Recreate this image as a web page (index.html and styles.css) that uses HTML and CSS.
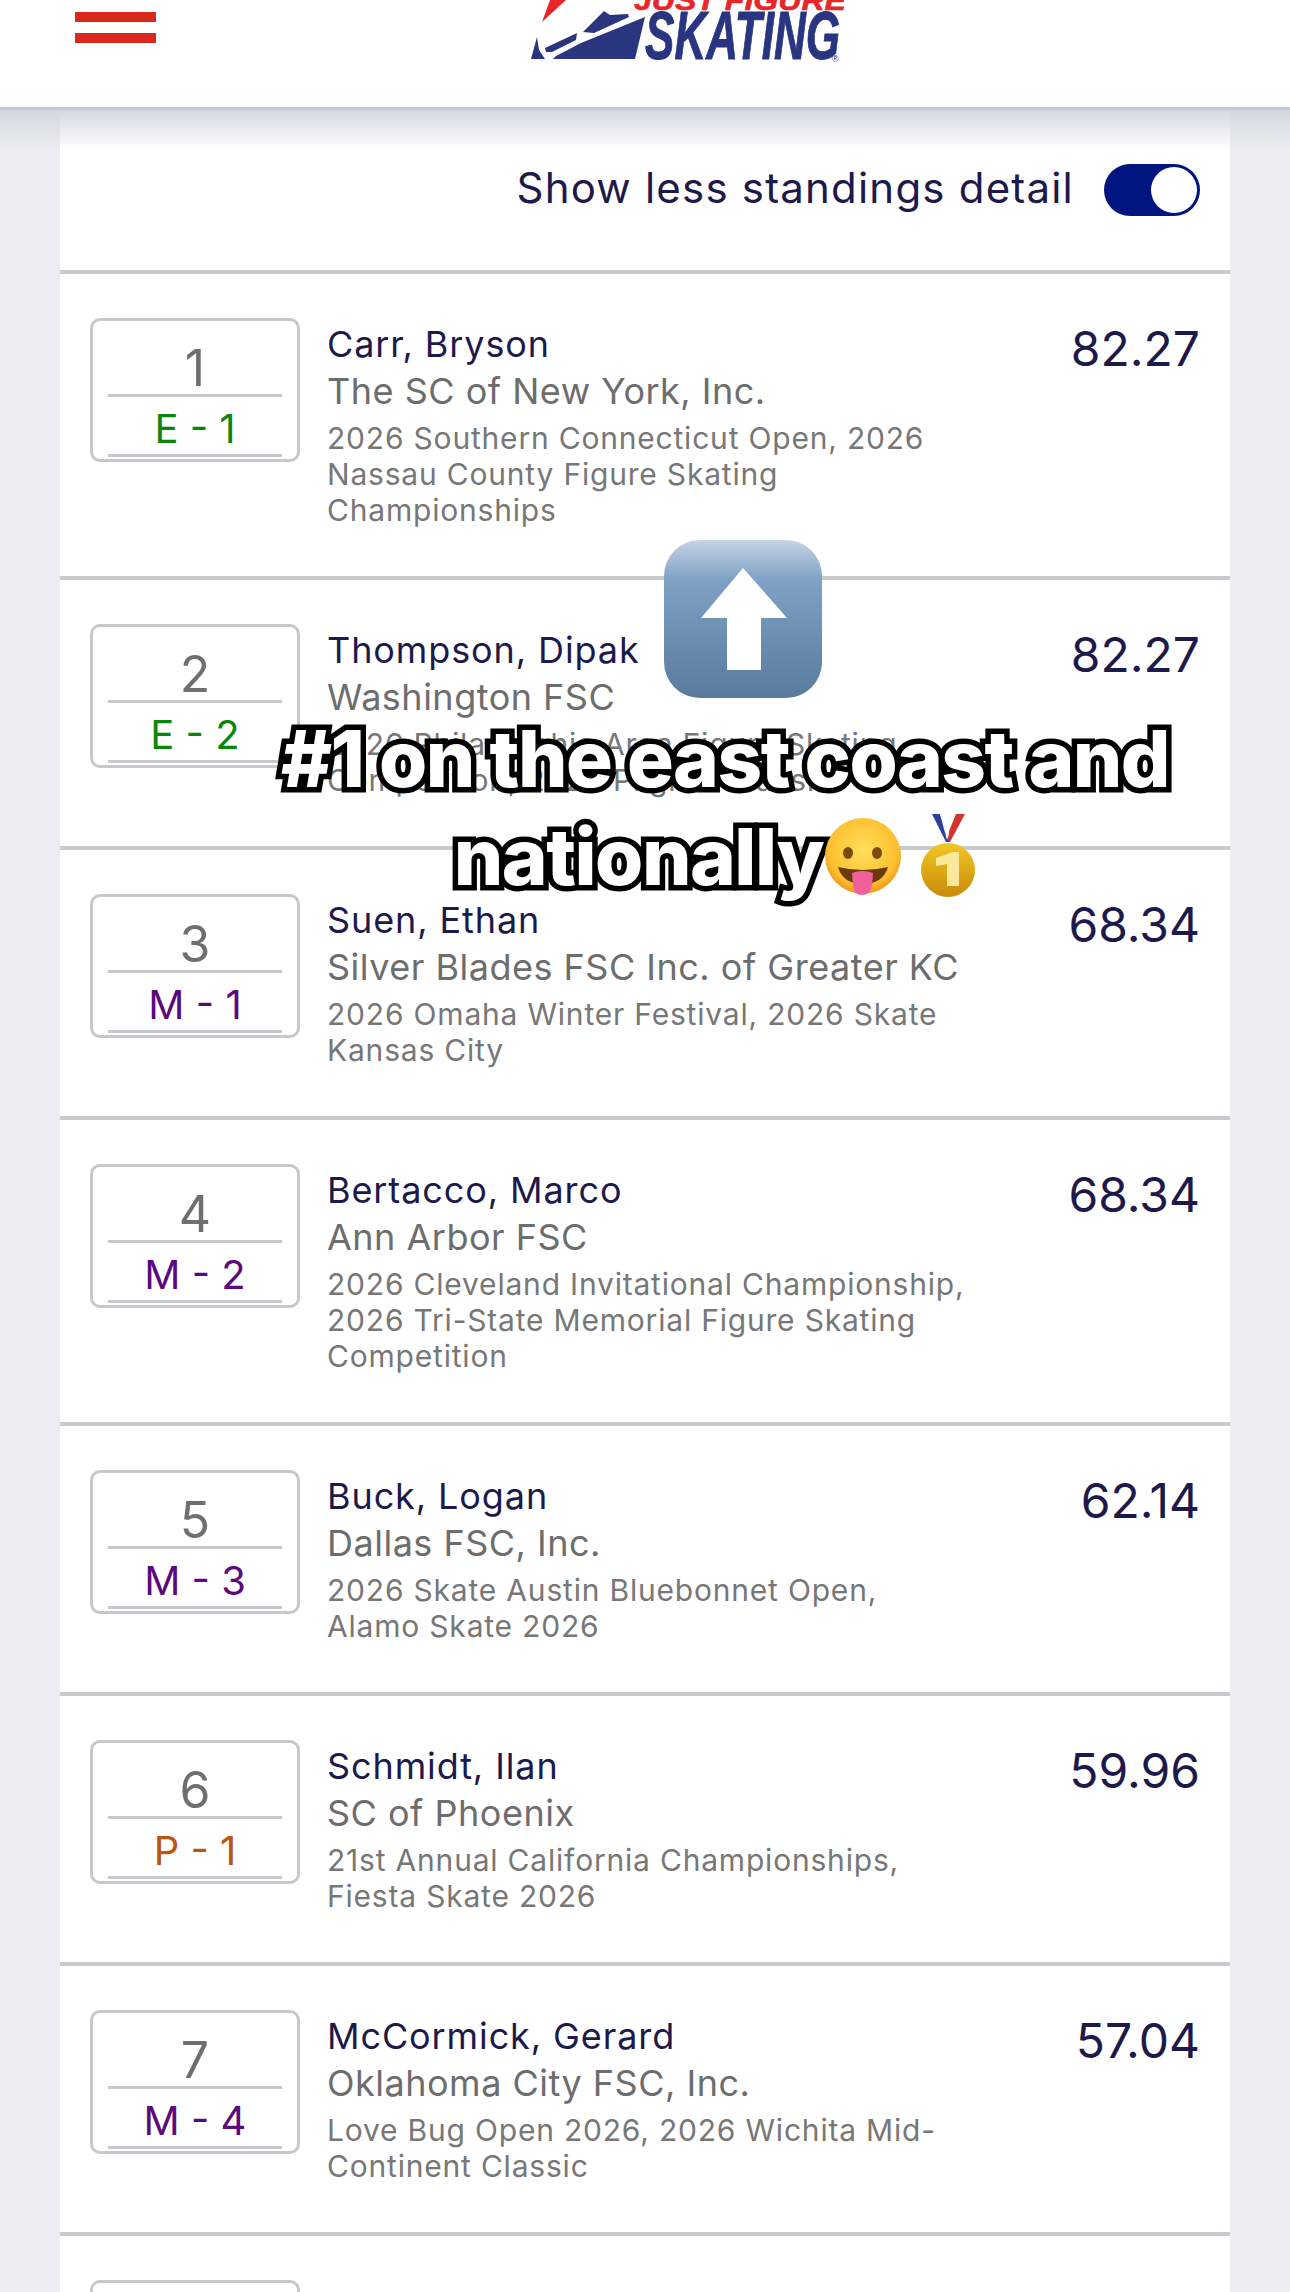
FILE: index.html
```html
<!DOCTYPE html>
<html lang="en">
<head>
  <meta charset="UTF-8">
  <title>Standings</title>
  <link rel="stylesheet" href="styles.css">
</head>
<body>
  <header class="topbar">
    <div class="burger"><span></span><span></span></div>
    <svg class="logo" viewBox="0 0 380 80" width="380" height="80">
      <polygon points="42,22 50,0 66,0" fill="#e8262a"/>
      <text x="134" y="10" class="logo-red" textLength="212" lengthAdjust="spacingAndGlyphs">JUST FIGURE</text>
      <polygon points="53,59 135,59 145,17 81,43 56,56" fill="#2a3580"/>
      <polygon points="83,32 104,11 110,15 128,14 129,17 94,33" fill="#2a3580"/>
      <polygon points="45,48 77,33 76,40 52,52 46,52" fill="#2a3580"/>
      <polygon points="31,59 37,37 39,50 45,59" fill="#2a3580"/>
      <text x="145" y="59" class="logo-blue" textLength="195" lengthAdjust="spacingAndGlyphs">SKATING</text>
      <text x="332" y="62" class="logo-reg">®</text>
    </svg>
  </header>
  <div class="topshade"></div>

  <main class="card">
    <div class="toggle-row">
      <span class="toggle-label">Show less standings detail</span>
      <span class="toggle"><span class="knob"></span></span>
    </div>

    <div class="row">
      <div class="rank"><div class="num">1</div><div class="lvl e">E - 1</div></div>
      <div class="info">
        <div class="name">Carr, Bryson</div>
        <div class="club">The SC of New York, Inc.</div>
        <div class="events">2026 Southern Connecticut Open, 2026<br>Nassau County Figure Skating<br>Championships</div>
      </div>
      <div class="score">82.27</div>
    </div>

    <div class="row">
      <div class="rank"><div class="num">2</div><div class="lvl e">E - 2</div></div>
      <div class="info">
        <div class="name">Thompson, Dipak</div>
        <div class="club">Washington FSC</div>
        <div class="events">2026 Philadelphia Area Figure Skating<br>Competition, 2026 Pilgrim Classic</div>
      </div>
      <div class="score">82.27</div>
    </div>

    <div class="row">
      <div class="rank"><div class="num">3</div><div class="lvl m">M - 1</div></div>
      <div class="info">
        <div class="name">Suen, Ethan</div>
        <div class="club">Silver Blades FSC Inc. of Greater KC</div>
        <div class="events">2026 Omaha Winter Festival, 2026 Skate<br>Kansas City</div>
      </div>
      <div class="score">68.34</div>
    </div>

    <div class="row">
      <div class="rank"><div class="num">4</div><div class="lvl m">M - 2</div></div>
      <div class="info">
        <div class="name">Bertacco, Marco</div>
        <div class="club">Ann Arbor FSC</div>
        <div class="events">2026 Cleveland Invitational Championship,<br>2026 Tri-State Memorial Figure Skating<br>Competition</div>
      </div>
      <div class="score">68.34</div>
    </div>

    <div class="row">
      <div class="rank"><div class="num">5</div><div class="lvl m">M - 3</div></div>
      <div class="info">
        <div class="name">Buck, Logan</div>
        <div class="club">Dallas FSC, Inc.</div>
        <div class="events">2026 Skate Austin Bluebonnet Open,<br>Alamo Skate 2026</div>
      </div>
      <div class="score">62.14</div>
    </div>

    <div class="row">
      <div class="rank"><div class="num">6</div><div class="lvl p">P - 1</div></div>
      <div class="info">
        <div class="name">Schmidt, Ilan</div>
        <div class="club">SC of Phoenix</div>
        <div class="events">21st Annual California Championships,<br>Fiesta Skate 2026</div>
      </div>
      <div class="score">59.96</div>
    </div>

    <div class="row">
      <div class="rank"><div class="num">7</div><div class="lvl m">M - 4</div></div>
      <div class="info">
        <div class="name">McCormick, Gerard</div>
        <div class="club">Oklahoma City FSC, Inc.</div>
        <div class="events">Love Bug Open 2026, 2026 Wichita Mid-<br>Continent Classic</div>
      </div>
      <div class="score">57.04</div>
    </div>

    <div class="row">
      <div class="rank"></div>
    </div>
  </main>

  <!-- arrow sticker and caption sit on top of the page -->
  <svg class="arrow-key" viewBox="0 0 158 158" width="158" height="158">
    <defs>
      <linearGradient id="keyfill" x1="0" y1="0" x2="0" y2="1">
        <stop offset="0" stop-color="#c5d4e4"/>
        <stop offset="0.25" stop-color="#7fa1c5"/>
        <stop offset="1" stop-color="#587a9c"/>
      </linearGradient>
    </defs>
    <rect width="158" height="158" rx="36" fill="url(#keyfill)"/>
    <polygon points="79,28 123,78 97,78 97,130 63,130 63,78 37,78" fill="#fff"/>
  </svg>

  <div class="caption">
    <div>#1 on the east coast and</div>
    <div class="caption-line">nationally<svg class="emoji" viewBox="0 0 80 82" width="80" height="82">
        <defs>
          <radialGradient id="facefill" cx="0.5" cy="0.42" r="0.6">
            <stop offset="0" stop-color="#ffdf5c"/>
            <stop offset="0.75" stop-color="#fcc02f"/>
            <stop offset="1" stop-color="#ee8f1c"/>
          </radialGradient>
        </defs>
        <circle cx="40" cy="40" r="38" fill="url(#facefill)"/>
        <ellipse cx="25" cy="37" rx="5" ry="6" fill="#7a4a12"/>
        <ellipse cx="54" cy="37" rx="5" ry="6" fill="#7a4a12"/>
        <path d="M15 51 Q40 57 65 51 Q60 68 40 68 Q20 68 15 51Z" fill="#6b3a0c"/>
        <path d="M29 57 Q40 53 50 57 L49 70 Q47 79 39 79 Q31 79 30 70Z" fill="#f0619b"/>
      </svg><svg class="emoji medal" viewBox="0 0 56 84" width="56" height="84">
        <defs>
          <linearGradient id="goldfill" x1="0" y1="0" x2="0" y2="1">
            <stop offset="0" stop-color="#f3c726"/>
            <stop offset="1" stop-color="#c98a08"/>
          </linearGradient>
        </defs>
        <polygon points="12,0 20,0 30,28 26,28" fill="#2b3f9e"/>
        <polygon points="45,0 36,0 27,22 30,28" fill="#d6332c"/>
        <polygon points="20,0 25,0 29,20 27,26" fill="#fff"/>
        <circle cx="28" cy="56" r="27" fill="url(#goldfill)"/>
        <polygon points="16,44 33,38 39,38 39,72 27,72 27,50 16,52" fill="#fbe89a"/>
      </svg></div>
  </div>
</body>
</html>
```

FILE: styles.css
```css
html, body {
  margin: 0;
  padding: 0;
}

body {
  position: relative;
  height: 2292px;
  overflow: hidden;
  background: #eaedf1;
  font-family: "Inter", "Open Sans", sans-serif;
}

.topbar {
  display: flex;
  align-items: flex-start;
  height: 107px;
  padding-left: 75px;
  background: #fff;
  border-bottom: 3px solid #c5c9cc;
  position: relative;
  z-index: 2;
}

.burger {
  width: 81px;
  padding-top: 12px;
}

.burger span {
  display: block;
  height: 10px;
  margin-bottom: 11px;
  background: #da291c;
}

.logo {
  margin-left: 344px;
}

.logo-red {
  font: italic bold 28px "Liberation Sans", sans-serif;
  fill: #e8262a;
  stroke: #e8262a;
  stroke-width: 0.6px;
}

.logo-blue {
  font: italic bold 68px "Liberation Sans", sans-serif;
  fill: #2a3580;
  stroke: #2a3580;
  stroke-width: 1px;
}

.logo-reg {
  font: 9px "Liberation Sans", sans-serif;
  fill: #2a3580;
}

.topshade {
  position: absolute;
  top: 110px;
  left: 0;
  right: 0;
  height: 40px;
  background: linear-gradient(to bottom, #d3d8e2, rgba(233, 236, 242, 0));
  z-index: 1;
}

.card {
  margin: 0 60px;
  background: #fff;
}

.toggle-row {
  display: flex;
  align-items: center;
  justify-content: flex-end;
  height: 164px;
  padding-right: 30px;
  box-sizing: border-box;
  border-bottom: 4px solid #c8cbce;
}

.toggle-label {
  font-size: 42px;
  letter-spacing: 1.2px;
  color: #1d1a4b;
  margin-right: 30px;
  margin-bottom: 6px;
}

.toggle {
  display: block;
  width: 96px;
  height: 52px;
  border-radius: 26px;
  background: #00157f;
  position: relative;
}

.knob {
  position: absolute;
  right: 3px;
  top: 3px;
  width: 46px;
  height: 46px;
  border-radius: 50%;
  background: #fff;
}

.row {
  display: flex;
  align-items: flex-start;
  padding: 44px 30px 0;
  min-height: 270px;
  box-sizing: border-box;
  border-bottom: 4px solid #c8cbce;
}

.rank {
  width: 210px;
  height: 144px;
  box-sizing: border-box;
  border: 3px solid #c5c9cc;
  border-radius: 10px;
  padding: 0 15px;
  text-align: center;
  flex-shrink: 0;
}

.num {
  height: 73px;
  line-height: 95px;
  font-size: 50px;
  color: #6f6f6f;
  border-bottom: 3px solid #c5c9cc;
}

.lvl {
  height: 57px;
  line-height: 63px;
  font-size: 40px;
  border-bottom: 3px solid #c5c9cc;
}

.lvl.e { color: #0a860a; }
.lvl.m { color: #5a0a7c; }
.lvl.p { color: #b9560f; }

.info {
  flex: 1;
  margin-left: 27px;
  padding-top: 3px;
  padding-bottom: 48px;
}

.name {
  font-size: 36px;
  letter-spacing: 0.9px;
  line-height: 46px;
  color: #1d1a4b;
}

.club {
  font-size: 36px;
  letter-spacing: 0.5px;
  line-height: 48px;
  color: #6d6d6d;
}

.events {
  font-size: 30px;
  letter-spacing: 0.8px;
  line-height: 36px;
  color: #777;
  margin-top: 5px;
}

.score {
  font-size: 48px;
  line-height: 62px;
  color: #1d1a4b;
}

.arrow-key {
  position: absolute;
  left: 664px;
  top: 540px;
  z-index: 3;
}

.caption {
  position: absolute;
  left: 210px;
  top: 710px;
  width: 1030px;
  text-align: center;
  font-family: "Inter", "Liberation Sans", sans-serif;
  font-weight: 800;
  font-size: 78px;
  line-height: 98px;
  letter-spacing: -1.5px;
  color: #fff;
  -webkit-text-stroke: 11px #000;
  paint-order: stroke fill;
  z-index: 4;
}

.caption-line {
  display: flex;
  justify-content: center;
  align-items: flex-end;
  padding-right: 20px;
}

.emoji {
  flex-shrink: 0;
  margin-bottom: 8px;
}

.medal {
  margin-left: 17px;
}
```
